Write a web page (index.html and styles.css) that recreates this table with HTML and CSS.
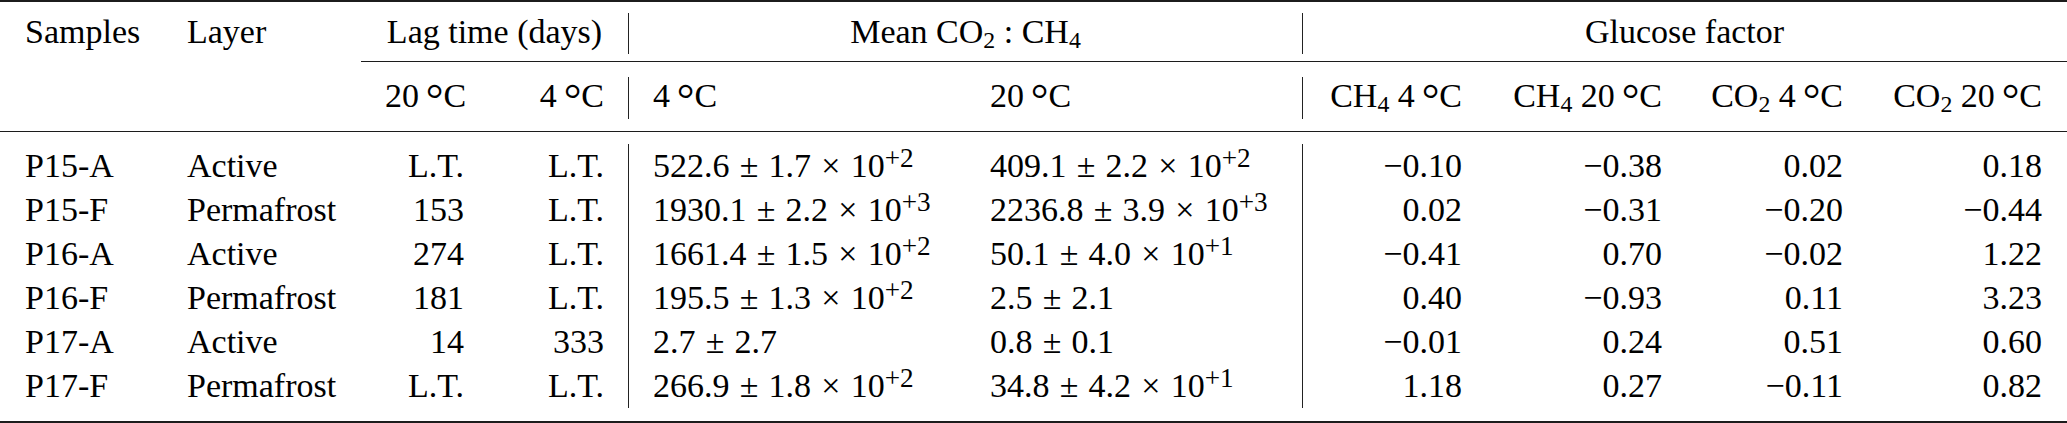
FILE: index.html
```html
<!DOCTYPE html>
<html lang="en">
<head>
  <meta charset="UTF-8">
  <meta name="viewport" content="width=device-width, initial-scale=1.0">
  <title>Lag time, CO2 : CH4 and glucose factor</title>

  <link rel="stylesheet" href="styles.css">
</head>
<body>

<table class="results">
  <colgroup>
    <col class="c-sample">
    <col class="c-layer">
    <col class="c-lag20">
    <col class="c-lag4">
    <col class="c-mean4">
    <col class="c-mean20">
    <col class="c-gf1">
    <col class="c-gf2">
    <col class="c-gf3">
    <col class="c-gf4">
  </colgroup>

  <thead>
    <tr class="rule rule-heavy"><td colspan="10"></td></tr>
    <tr class="gap gap-top"><td colspan="10"></td></tr>
    <tr class="head">
      <td>Samples</td>
      <td>Layer</td>
      <td colspan="2" class="center">Lag time (days)</td>
      <td colspan="2" class="center vline">Mean CO<span class="sub">2</span> : CH<span class="sub">4</span></td>
      <td colspan="4" class="center vline">Glucose factor</td>
    </tr>
    <tr class="gap gap-cmid-above"><td colspan="10"></td></tr>
    <tr class="rule cmidrule"><td colspan="2" class="blank"></td><td colspan="8"></td></tr>
    <tr class="gap gap-cmid-below"><td colspan="10"></td></tr>
    <tr class="head head-units">
      <td></td>
      <td></td>
      <td class="right">20&thinsp;<span class="deg">°</span>C</td>
      <td class="right">4&thinsp;<span class="deg">°</span>C</td>
      <td class="vline">4&thinsp;<span class="deg">°</span>C</td>
      <td>20&thinsp;<span class="deg">°</span>C</td>
      <td class="right vline">CH<span class="sub">4</span> 4&thinsp;<span class="deg">°</span>C</td>
      <td class="right">CH<span class="sub">4</span> 20&thinsp;<span class="deg">°</span>C</td>
      <td class="right">CO<span class="sub">2</span> 4&thinsp;<span class="deg">°</span>C</td>
      <td class="right">CO<span class="sub">2</span> 20&thinsp;<span class="deg">°</span>C</td>
    </tr>
    <tr class="gap gap-mid-above"><td colspan="10"></td></tr>
    <tr class="rule"><td colspan="10"></td></tr>
    <tr class="gap gap-mid-below"><td colspan="10"></td></tr>
  </thead>

  <tbody class="data">
    <tr>
      <td>P15-A</td><td>Active</td><td>L.T.</td><td>L.T.</td>
      <td>522.6 ± 1.7 × 10<span class="sup">+2</span></td>
      <td>409.1 ± 2.2 × 10<span class="sup">+2</span></td>
      <td>−0.10</td><td>−0.38</td><td>0.02</td><td>0.18</td>
    </tr>
    <tr>
      <td>P15-F</td><td>Permafrost</td><td>153</td><td>L.T.</td>
      <td>1930.1 ± 2.2 × 10<span class="sup">+3</span></td>
      <td>2236.8 ± 3.9 × 10<span class="sup">+3</span></td>
      <td>0.02</td><td>−0.31</td><td>−0.20</td><td>−0.44</td>
    </tr>
    <tr>
      <td>P16-A</td><td>Active</td><td>274</td><td>L.T.</td>
      <td>1661.4 ± 1.5 × 10<span class="sup">+2</span></td>
      <td>50.1 ± 4.0 × 10<span class="sup">+1</span></td>
      <td>−0.41</td><td>0.70</td><td>−0.02</td><td>1.22</td>
    </tr>
    <tr>
      <td>P16-F</td><td>Permafrost</td><td>181</td><td>L.T.</td>
      <td>195.5 ± 1.3 × 10<span class="sup">+2</span></td>
      <td>2.5 ± 2.1</td>
      <td>0.40</td><td>−0.93</td><td>0.11</td><td>3.23</td>
    </tr>
    <tr>
      <td>P17-A</td><td>Active</td><td>14</td><td>333</td>
      <td>2.7 ± 2.7</td>
      <td>0.8 ± 0.1</td>
      <td>−0.01</td><td>0.24</td><td>0.51</td><td>0.60</td>
    </tr>
    <tr>
      <td>P17-F</td><td>Permafrost</td><td>L.T.</td><td>L.T.</td>
      <td>266.9 ± 1.8 × 10<span class="sup">+2</span></td>
      <td>34.8 ± 4.2 × 10<span class="sup">+1</span></td>
      <td>1.18</td><td>0.27</td><td>−0.11</td><td>0.82</td>
    </tr>
  </tbody>

  <tbody>
    <tr class="gap gap-bottom"><td colspan="10"></td></tr>
    <tr class="rule rule-heavy"><td colspan="10"></td></tr>
  </tbody>
</table>

</body>
</html>
```

FILE: styles.css
```css
body {
  margin: 0;
  background: #ffffff;
  color: #000000;
  font-family: "Liberation Serif", "Times New Roman", serif;
  font-size: 34px;
}

.results {
  width: 2067px;
  table-layout: fixed;
  border-collapse: separate;
  border-spacing: 0;
}

.results td {
  padding: 0 24px;
  white-space: nowrap;
  vertical-align: top;
}

.results td:first-child { padding-left: 25px; }
.results td:last-child { padding-right: 25px; }

/* column widths */
.c-sample { width: 163px; }
.c-layer { width: 198px; }
.c-lag20 { width: 127px; }
.c-lag4 { width: 140px; }
.c-mean4 { width: 338px; }
.c-mean20 { width: 336px; }
.c-gf1 { width: 184px; }
.c-gf2 { width: 200px; }
.c-gf3 { width: 181px; }
.c-gf4 { width: 200px; }

/* booktabs style rules and the space around them */
.rule, .gap {
  font-size: 0;
  line-height: 0;
}

.rule td, .gap td { padding: 0; }

.rule { height: 1px; }
.rule td { background: #1c1c1c; }
.rule-heavy { height: 2px; }
.cmidrule td.blank { background: none; }

.gap-top { height: 11px; }
.gap-cmid-above { height: 7px; }
.gap-cmid-below { height: 15px; }
.gap-mid-above { height: 12px; }
.gap-mid-below { height: 12px; }
.gap-bottom { height: 13px; }

/* header */
.head td {
  line-height: 37px;
  padding-bottom: 4px;
}

.head-units td { padding-bottom: 5px; }

.center { text-align: center; }
.right { text-align: right; }
.vline { border-left: 1px solid #222222; }

/* body */
.data td { line-height: 44px; }

.data td:nth-child(3),
.data td:nth-child(4),
.data td:nth-child(n+7) { text-align: right; }

.data td:nth-child(5),
.data td:nth-child(7) { border-left: 1px solid #222222; }

.data td:nth-child(5),
.data td:nth-child(6) { word-spacing: 0.05em; }

/* chemistry and units */
.sub {
  font-size: 0.7em;
  line-height: 0;
  vertical-align: -0.23em;
}

.sup {
  font-size: 0.8em;
  line-height: 0;
  vertical-align: 0.38em;
}

.deg {
  font-size: 1.3em;
  line-height: 0;
  vertical-align: -0.15em;
}
```
